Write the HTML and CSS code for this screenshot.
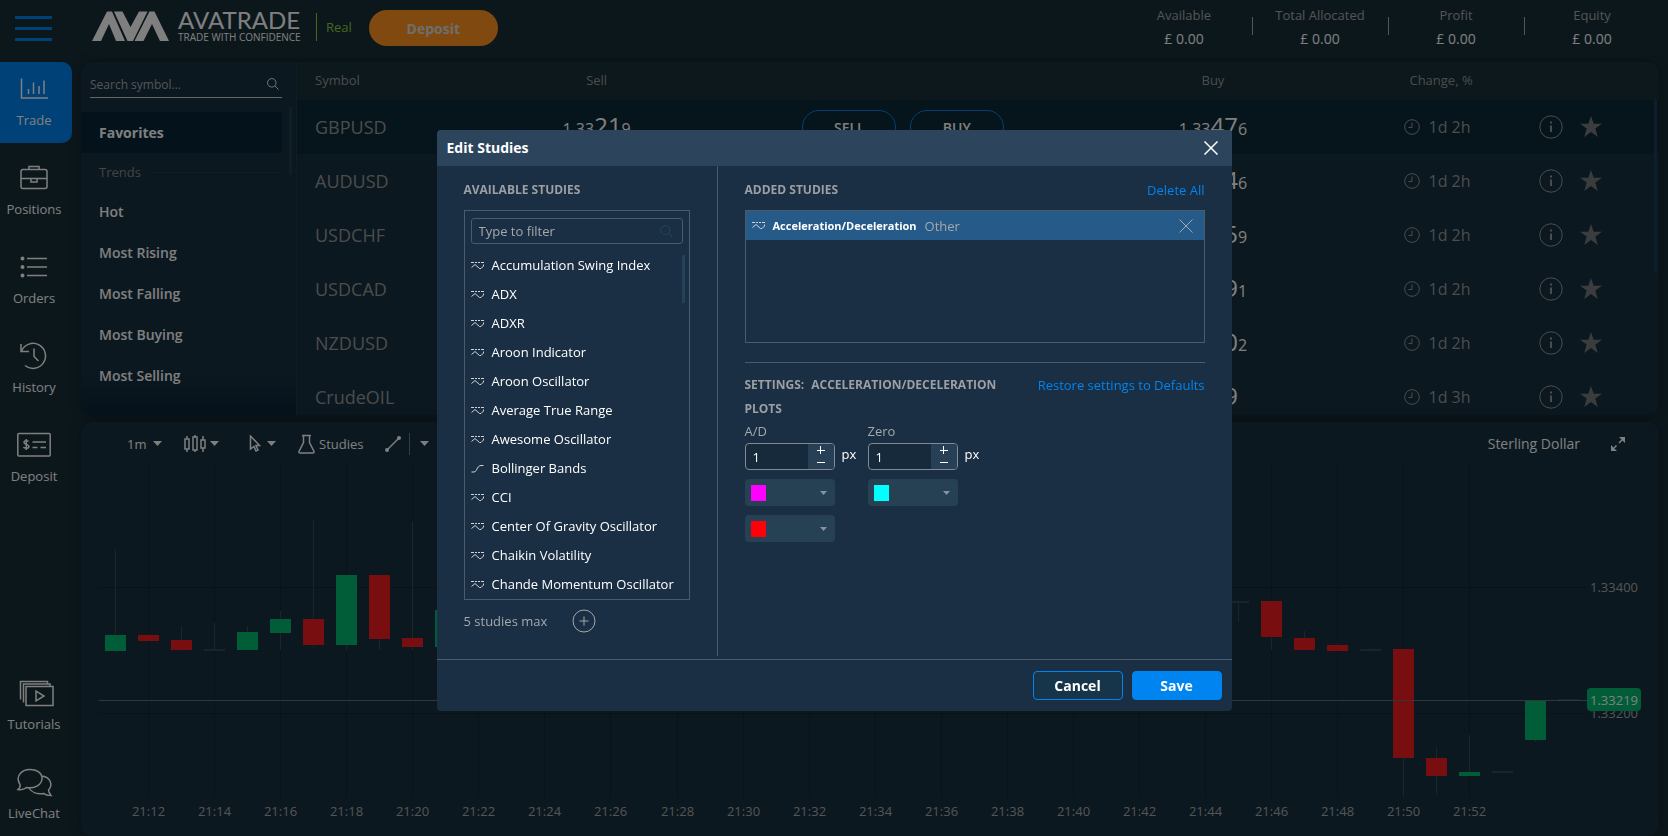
FILE: index.html
```html
<!DOCTYPE html>
<html lang="en">
<head>
  <meta charset="utf-8">
  <title>AvaTrade WebTrader</title>
  <meta name="viewport" content="width=device-width, initial-scale=1">
  <link rel="stylesheet" href="styles.css">
</head>

<body>
  <!-- shared icons -->
  <svg class="sprite" aria-hidden="true">
    <symbol id="i-study" viewBox="0 0 13 9">
      <path d="M0 1.5h3M4 1.5h2M7 1.5h2M10 1.5h3" />
      <path d="M.5 6.5L4 3.5L8.5 7.5H10L12.5 5V3.5" />
    </symbol>
    <symbol id="i-band" viewBox="0 0 13 9">
      <path d="M.5 8H3C5 8 5.500 5.500 6.500 4S8.500 1.500 10 1.500H12.500" />
    </symbol>
    <symbol id="i-clock" viewBox="0 0 16 16">
      <circle cx="8" cy="8" r="7.300" />
      <path d="M8 3.500V8.500H4.500" />
    </symbol>
    <symbol id="i-info" viewBox="0 0 24 24">
      <circle cx="12" cy="12" r="11.200" />
      <path d="M12 10.500V17M12 6.500V8.500" stroke-width="2" />
    </symbol>
    <symbol id="i-star" viewBox="0 0 22 22">
      <path d="M11 0L13.700 7.700H22L15.300 12.600L17.800 21L11 16L4.200 21L6.700 12.600L0 7.700H8.300Z" />
    </symbol>
    <symbol id="i-search" viewBox="0 0 13 13">
      <circle cx="5.200" cy="5.200" r="4.600" />
      <path d="M8.600 8.600L12.500 12.500" />
    </symbol>
    <symbol id="i-close" viewBox="0 0 14 14">
      <path d="M.5 .5L13.500 13.500M13.500 .5L.5 13.500" />
    </symbol>
    <symbol id="i-caret" viewBox="0 0 9 5">
      <path d="M0 0H9L4.500 5Z" />
    </symbol>
  </svg>

  <header class="topbar">
    <button class="menu-btn" type="button" aria-label="Menu"><span></span><span></span><span></span></button>
    <svg class="logo" width="208" height="34" viewBox="0 0 208 34" role="img" aria-label="AvaTrade">
      <path d="M0 31L15 1.500H20L33 31H24L17 14L9 31Z" />
      <path d="M22 1.500H30.500L38.500 17L47 1.500H55.500L41 31H35.500Z" />
      <path d="M57.500 1.500H62.500L77 31H68L60 14L51.500 31H42.500Z" />
      <text class="logo-name" x="86" y="19">AVATRADE</text>
      <text class="logo-tag" x="86" y="31">TRADE WITH CONFIDENCE</text>
    </svg>
    <span class="account-type">Real</span>
    <button class="deposit-btn" type="button">Deposit</button>
    <dl class="stats">
      <div class="stat"><dt>Available</dt><dd>£ 0.00</dd></div>
      <div class="stat"><dt>Total Allocated</dt><dd>£ 0.00</dd></div>
      <div class="stat"><dt>Profit</dt><dd>£ 0.00</dd></div>
      <div class="stat"><dt>Equity</dt><dd>£ 0.00</dd></div>
    </dl>
  </header>

  <div class="layout">
    <nav class="sidebar">
      <a href="#trade" class="side-item active">
        <svg width="34" height="28" viewBox="0 0 34 28"><path d="M4.500 3.500V23H31M11.500 14V19M16.500 7.500V19M22 11V19M27 5.500V19" /></svg>
        Trade
      </a>
      <a href="#positions" class="side-item">
        <svg width="34" height="28" viewBox="0 0 34 28"><rect x="4" y="5.500" width="26" height="19" rx="2" /><path d="M12 5V2.500H22V5M4 14.500H30M14 15V18H20V15" /></svg>
        Positions
      </a>
      <a href="#orders" class="side-item">
        <svg width="34" height="28" viewBox="0 0 34 28"><path d="M10 5.500H30M10 14H30M10 22.500H30" /><path class="dots" d="M5.500 5.500h.01M5.500 14h.01M5.500 22.500h.01" /></svg>
        Orders
      </a>
      <a href="#history" class="side-item">
        <svg width="34" height="28" viewBox="0 0 34 28"><path d="M4 2V9.500H12M4.500 9A12.500 12.500 0 1 1 8 23.500M17 6.500V14.500L21.500 19" /></svg>
        History
      </a>
      <a href="#deposit" class="side-item">
        <svg width="34" height="28" viewBox="0 0 34 28"><rect x=".8" y="2.500" width="32.400" height="22.500" rx="1" /><path d="M15.500 11H29M15.500 16.500H20.500M23.500 16.500H29M11.500 10.500C11 9.500 7 9 7 11.500S12 13 12 15.500S7 17.500 6.500 16M9.300 8V19" /></svg>
        Deposit
      </a>
      <a href="#tutorials" class="side-item push">
        <svg width="34" height="28" viewBox="0 0 34 28"><rect x="9" y="7.500" width="27" height="19" /><path d="M6.500 23.500V5H33V7M3.500 20.500V2.500H30.500V4.500M19 12V22L27 17Z" /></svg>
        Tutorials
      </a>
      <a href="#livechat" class="side-item">
        <svg width="34" height="28" viewBox="0 0 34 28"><path d="M1 21.500C3 20 3.500 18.500 3 16.500C-2 9 4 1.500 13 1.500C21 1.500 25.500 6 25 11C24.500 17 17 21 9.500 19.500C7 21.500 4 22 1 21.500ZM25 8C34 9.500 36 17 31.500 22C31.500 24 32.500 25.500 34 27.500C31 27.500 28.500 27 27 25.500C20.500 26.500 14.500 24.500 12 20" /></svg>
        LiveChat
      </a>
    </nav>

    <main class="main">
      <section class="panel quotes">
        <div class="watch">
          <div class="watch-search">
            <input type="search" placeholder="Search symbol..." aria-label="Search symbol">
            <svg class="line-icon" width="12" height="12"><use href="#i-search" /></svg>
          </div>
          <ul class="watch-list">
            <li><a href="#favorites" class="current">Favorites</a></li>
            <li class="group">Trends</li>
            <li><a href="#hot">Hot</a></li>
            <li><a href="#rising">Most Rising</a></li>
            <li><a href="#falling">Most Falling</a></li>
            <li><a href="#buying">Most Buying</a></li>
            <li><a href="#selling">Most Selling</a></li>
          </ul>
          <span class="thumb watch-thumb"></span>
        </div>

        <div class="rates">
          <table>
            <colgroup>
              <col class="c-symbol"><col class="c-sell"><col class="c-deal"><col class="c-buy"><col class="c-change"><col class="c-tools"><col>
            </colgroup>
            <thead>
              <tr><th class="left">Symbol</th><th>Sell</th><th></th><th>Buy</th><th>Change, %</th><th></th><th></th></tr>
            </thead>
            <tbody id="rates"></tbody>
          </table>
          <span class="thumb rates-thumb"></span>
        </div>
      </section>

      <section class="panel chart">
        <div class="toolbar">
          <label class="period">
            <select aria-label="Period"><option>1m</option></select>
            <svg class="caret" width="9" height="5"><use href="#i-caret" /></svg>
          </label>
          <button type="button" class="tool t-type" aria-label="Chart type">
            <svg width="22" height="18" viewBox="0 0 22 18"><path d="M3 1V4M3 14V17M11 0V2M11 15V17M19 1V5M19 13V17" /><rect x="1" y="4" width="4" height="10" /><rect x="9" y="2" width="4" height="13" /><rect x="17" y="5" width="4" height="8" /></svg>
            <svg class="caret" width="9" height="5"><use href="#i-caret" /></svg>
          </button>
          <button type="button" class="tool t-cursor" aria-label="Cursor">
            <svg width="12" height="17" viewBox="0 0 12 17"><path d="M1.500 1L10.500 10.500H7L9 15L7 16L5 11.500L1.500 14Z" /></svg>
            <svg class="caret" width="9" height="5"><use href="#i-caret" /></svg>
          </button>
          <button type="button" class="tool t-studies">
            <svg width="17" height="20" viewBox="0 0 17 20"><path d="M4 1.500H13M5.500 2V8.500L1 17.500Q.8 19 2 19H15Q16.200 19 16 17.500L11.500 8.500V2" /></svg>
            Studies
          </button>
          <button type="button" class="tool t-line" aria-label="Trend line">
            <svg width="16" height="16" viewBox="0 0 16 16"><path d="M2 14L14 2" /><path class="dots" d="M2 14h.01M14 2h.01" /></svg>
          </button>
          <button type="button" class="tool t-more" aria-label="More drawings">
            <svg class="caret" width="9" height="5"><use href="#i-caret" /></svg>
          </button>
          <span class="chart-title">Sterling Dollar</span>
          <button type="button" class="tool t-full" aria-label="Full screen">
            <svg width="14" height="14" viewBox="0 0 14 14"><path d="M3 11L5.500 8.500M8 6L11.500 2.500" /><path class="solid" d="M8 0H14V6L8 0ZM0 8V14H6Z" /></svg>
          </button>
        </div>
        <svg id="plot" class="plot" viewBox="0 0 1578 373" role="img" aria-label="GBPUSD price chart"></svg>
      </section>
    </main>
  </div>

  <div class="backdrop">
    <div class="dialog" role="dialog" aria-labelledby="dlg-title">
      <div class="dialog-head">
        <h1 id="dlg-title">Edit Studies</h1>
        <button type="button" class="icon-btn" aria-label="Close"><svg class="line-icon" width="14" height="14"><use href="#i-close" /></svg></button>
      </div>

      <div class="dialog-body">
        <section class="available">
          <h2>Available Studies</h2>
          <div class="study-box">
            <div class="filter">
              <input type="text" placeholder="Type to filter" aria-label="Filter studies">
              <svg class="line-icon" width="13" height="13"><use href="#i-search" /></svg>
            </div>
            <ul class="studies" id="studies"></ul>
            <span class="thumb study-thumb"></span>
          </div>
          <div class="limit">
            <span>5 studies max</span>
            <button type="button" class="icon-btn" aria-label="Add study">
              <svg class="line-icon" width="24" height="24" viewBox="0 0 24 24"><circle cx="12" cy="12" r="11" /><path d="M12 7.500V16.500M7.500 12H16.500" /></svg>
            </button>
          </div>
        </section>

        <section class="added">
          <div class="row">
            <h2>Added Studies</h2>
            <a href="#delete-all">Delete All</a>
          </div>
          <div class="added-box">
            <div class="added-item">
              <svg class="line-icon" width="13" height="9"><use href="#i-study" /></svg>
              <strong>Acceleration/Deceleration</strong>
              <span>Other</span>
              <button type="button" class="icon-btn" aria-label="Remove study"><svg class="line-icon" width="14" height="14"><use href="#i-close" /></svg></button>
            </div>
          </div>

          <div class="row settings-row">
            <h2>Settings: <span>Acceleration/Deceleration</span></h2>
            <a href="#restore">Restore settings to Defaults</a>
          </div>
          <h2 class="plots-title">Plots</h2>
          <div class="plots">
            <div class="plot-set">
              <label for="ad">A/D</label>
              <div class="size">
                <div class="stepper">
                  <input id="ad" type="text" value="1">
                  <span class="steps"><button type="button" class="plus" aria-label="Increase"></button><button type="button" class="minus" aria-label="Decrease"></button></span>
                </div>
                px
              </div>
              <div class="color magenta"><select aria-label="A/D first color"><option value="magenta"></option></select><svg class="caret" width="7" height="4" viewBox="0 0 9 5"><path d="M0 0H9L4.500 5Z" /></svg></div>
              <div class="color red"><select aria-label="A/D second color"><option value="red"></option></select><svg class="caret" width="7" height="4" viewBox="0 0 9 5"><path d="M0 0H9L4.500 5Z" /></svg></div>
            </div>
            <div class="plot-set">
              <label for="zero">Zero</label>
              <div class="size">
                <div class="stepper">
                  <input id="zero" type="text" value="1">
                  <span class="steps"><button type="button" class="plus" aria-label="Increase"></button><button type="button" class="minus" aria-label="Decrease"></button></span>
                </div>
                px
              </div>
              <div class="color cyan"><select aria-label="Zero color"><option value="cyan"></option></select><svg class="caret" width="7" height="4" viewBox="0 0 9 5"><path d="M0 0H9L4.500 5Z" /></svg></div>
            </div>
          </div>
        </section>
      </div>

      <div class="dialog-foot">
        <button type="button" class="btn">Cancel</button>
        <button type="button" class="btn primary">Save</button>
      </div>
    </div>
  </div>

  <script src="app.js"></script>
</body>
</html>
```

FILE: styles.css
```css
* {
  box-sizing: border-box;
}
body {
  margin: 0;
  height: 100vh;
  display: flex;
  flex-direction: column;
  overflow: hidden;
  background: #182e38;
  color: #fff;
  font-family: "Open Sans", "Noto Sans", sans-serif;
  font-size: 13px;
}
button, input, select {
  font: inherit;
  color: inherit;
  background: none;
  border: none;
  padding: 0;
  margin: 0;
  appearance: none;
  outline: none;
}
button {
  cursor: pointer;
}
a {
  color: #0084f0;
  text-decoration: none;
}
h1, h2, ul, dl, dd {
  margin: 0;
  padding: 0;
}
ul {
  list-style: none;
}
svg {
  display: block;
  flex: none;
}
.sprite {
  position: absolute;
  width: 0;
  height: 0;
}
.line-icon {
  fill: none;
  stroke: currentColor;
}
.caret {
  fill: currentColor;
}

/* top bar */
.topbar {
  flex: none;
  display: flex;
  align-items: center;
  height: 62px;
  padding: 0 8px 8px 15px;
}
.menu-btn {
  display: flex;
  flex-direction: column;
  gap: 8px;
  width: 37px;
  margin: 2px 40px 0 0;
}
.menu-btn span {
  height: 3px;
  background: #0082f0;
}
.logo {
  fill: #fff;
  overflow: visible;
}
.logo-name {
  font-family: Lato, sans-serif;
  font-size: 24px;
  font-weight: 400;
}
.logo-tag {
  font-family: "Open Sans", sans-serif;
  font-size: 10px;
}
.account-type {
  height: 28px;
  margin-left: 16px;
  padding-left: 9px;
  border-left: 1px solid #8ccc40;
  color: #8ccc40;
  line-height: 28px;
}
.deposit-btn {
  width: 129px;
  height: 36px;
  margin: 2px 0 0 17px;
  border-radius: 18px;
  background: #fe931f;
  color: #ddd;
  font-size: 14px;
  font-weight: 700;
}
.stats {
  display: flex;
  margin-left: auto;
  text-align: center;
}
.stat {
  position: relative;
  width: 136px;
}
.stat + .stat::before {
  content: "";
  position: absolute;
  left: 0;
  top: 14px;
  height: 18px;
  border-left: 1px solid #aaa;
}
.stat dt {
  color: #aaa;
  line-height: 24px;
}
.stat dd {
  font-size: 14px;
  line-height: 24px;
}

/* sidebar */
.layout {
  flex: 1;
  display: flex;
  min-height: 0;
}
.sidebar {
  flex: none;
  display: flex;
  flex-direction: column;
  gap: 8px;
  width: 81px;
}
.side-item {
  display: flex;
  flex-direction: column;
  align-items: center;
  gap: 8px;
  width: 72px;
  height: 81px;
  padding: 13px 4px 0 0;
  border-radius: 0 10px 10px 0;
  color: #fff;
  line-height: 18px;
}
.side-item.active {
  background: #0082f0;
}
.side-item svg {
  fill: none;
  stroke: #fff;
  stroke-width: 1.500;
  overflow: visible;
}
.side-item .dots {
  stroke-width: 4;
  stroke-linecap: round;
}
.push {
  margin-top: auto;
}

/* panels */
.main {
  flex: 1;
  display: grid;
  grid-template-rows: 46fr 54fr;
  gap: 7px;
  min-width: 0;
  margin-right: 9px;
}
.panel {
  min-height: 0;
  border-radius: 12px;
  background: #163040;
  box-shadow: 0 0 12px rgba(0, 0, 0, .35);
  overflow: hidden;
}
.quotes {
  display: flex;
}
.thumb {
  position: absolute;
  width: 3px;
  background: #1e3c52;
}
.watch {
  position: relative;
  flex: none;
  width: 216px;
  border-right: 1px solid #23394c;
  background: linear-gradient(#163040 88%, #0a2436);
}
.watch-search {
  display: flex;
  align-items: center;
  height: 27px;
  margin: 9px 14px 14px 9px;
  border-bottom: 1px solid #ccc;
  padding-right: 3px;
}
.watch-search input {
  flex: 1;
  min-width: 0;
  font-size: 12px;
}
.watch-search input::placeholder {
  color: #aaa;
}
.watch-list a, .group {
  display: block;
  height: 41px;
  margin-right: 14px;
  padding-left: 18px;
  color: #fff;
  font-size: 14px;
  font-weight: 600;
  line-height: 41px;
}
.watch-list .current {
  background: #082436;
  font-weight: 700;
}
.watch-list .group {
  display: flex;
  align-items: center;
  gap: 9px;
  height: 38px;
  color: #888;
  font-size: 13px;
  font-weight: 400;
}
.group::after {
  content: "";
  flex: 1;
  border-top: 1px solid #23394c;
}
.watch-thumb {
  right: 4px;
  top: 45px;
  height: 68px;
}
.rates {
  position: relative;
  flex: 1;
}
.rates table {
  width: 100%;
  table-layout: fixed;
  border-collapse: collapse;
  text-align: center;
}
.c-symbol { width: 12%; }
.c-sell { width: 20%; }
.c-deal { width: 25%; }
.c-buy { width: 20.500%; }
.c-change { width: 13%; }
.c-tools { width: 6%; }
.rates th {
  height: 38px;
  padding: 0 0 3px;
  background: #1a3039;
  color: #999;
  font-size: 13px;
  font-weight: 400;
}
.rates td {
  height: 54px;
  padding: 0;
}
.rates .left {
  padding-left: 18px;
  text-align: left;
}
.rates .symbol {
  color: #999;
  font-size: 18px;
}
.rates tbody tr:first-child {
  background: #0c2838;
}
.price {
  font-size: 16px;
  line-height: 24px;
}
.price b {
  font-size: 24px;
  font-weight: 400;
}
.deal {
  width: 94px;
  height: 34px;
  margin: 0 5px;
  border: 1px solid #0082f0;
  border-radius: 17px;
  font-size: 14px;
  font-weight: 600;
}
.change, .tools {
  display: flex;
  align-items: center;
  justify-content: center;
  color: #999;
}
.change {
  gap: 9px;
  padding-right: 8px;
  font-size: 16px;
}
.tools {
  gap: 17px;
}
.star {
  fill: #77787a;
}
.rates-thumb {
  right: 2px;
  top: 37px;
  height: 174px;
}

/* chart */
.chart {
  display: flex;
  flex-direction: column;
}
.toolbar {
  flex: none;
  display: flex;
  align-items: center;
  height: 41px;
  padding: 3px 34px 0 46px;
}
.period, .tool {
  display: flex;
  align-items: center;
  gap: 6px;
}
.tool {
  height: 22px;
}
.tool svg:not(.caret) {
  fill: none;
  stroke: #fff;
  stroke-width: 1.500;
}
.tool .dots {
  stroke-width: 4;
  stroke-linecap: round;
}
.tool .solid {
  fill: #fff;
  stroke: none;
}
.t-type { gap: 4px; margin-left: 22px; }
.t-cursor { margin-left: 30px; }
.t-studies { gap: 4px; margin-left: 22px; }
.t-line { margin-left: 22px; }
.t-more {
  margin-left: 8px;
  padding-left: 10px;
  border-left: 1px solid #777;
}
.chart-title {
  margin-left: auto;
  font-size: 14px;
}
.t-full {
  margin-left: 31px;
}
.plot {
  width: 100%;
}
.plot text {
  fill: #aaa;
  font-size: 13px;
  text-anchor: middle;
}
.plot .last-price { fill: #fff; }
.plot .grid { stroke: #102430; }
.plot .now { stroke: #60707a; }
.plot .wick { stroke: #3c4a54; }
.plot .g { fill: #00ba70; }
.plot .r { fill: #f01c20; }
.plot .n { fill: #364854; }

/* edit studies dialog */
.backdrop {
  position: fixed;
  inset: 0;
  display: flex;
  align-items: center;
  justify-content: center;
  padding-top: 5px;
  background: rgba(0, 0, 0, .5);
}
.dialog {
  width: 795px;
  border-radius: 4px;
  background: #1a2f43;
  overflow: hidden;
}
.dialog-head {
  display: flex;
  align-items: center;
  justify-content: space-between;
  height: 36px;
  padding: 0 14px 0 10px;
  background: #2c455c;
}
.dialog-head h1 {
  font-size: 14px;
  line-height: 20px;
}
.dialog-head .line-icon {
  stroke-width: 1.500;
}
.dialog-body {
  display: flex;
  padding-bottom: 3px;
}
.dialog h2 {
  color: #9c9fa3;
  font-size: 12px;
  font-weight: 700;
  line-height: 16px;
  text-transform: uppercase;
}
.available {
  flex: none;
  width: 281px;
  padding: 16px 27px 23px;
  border-right: 1px solid #4a5b6c;
}
.study-box {
  position: relative;
  margin-top: 12px;
  padding: 7px 6px 0;
  border: 1px solid #4a5b6c;
}
.filter {
  display: flex;
  align-items: center;
  height: 26px;
  margin-bottom: 7px;
  padding: 0 9px 0 7px;
  border: 1px solid #4a5b6c;
  border-radius: 3px;
}
.filter input {
  flex: 1;
  min-width: 0;
}
.filter input::placeholder {
  color: #a5a8ac;
}
.filter .line-icon {
  color: #28465c;
}
.studies li {
  display: flex;
  align-items: center;
  gap: 8px;
  height: 29px;
  padding-bottom: 1px;
  white-space: nowrap;
}
.studies svg, .added-item > svg {
  stroke: #cfd5da;
}
.study-thumb {
  right: 4px;
  top: 44px;
  height: 48px;
  background: #24425a;
}
.limit {
  display: flex;
  align-items: center;
  gap: 25px;
  margin-top: 9px;
  color: #a5a8ac;
}
.added {
  flex: 1;
  padding: 16px 27px 0;
}
.row {
  display: flex;
  justify-content: space-between;
  line-height: 16px;
}
.added-box {
  height: 133px;
  margin: 12px 0 19px;
  border: 1px solid #4a5b6c;
}
.added-item {
  display: flex;
  align-items: center;
  gap: 8px;
  height: 29px;
  padding: 0 11px 0 6px;
  background: #265a88;
}
.added-item strong {
  font-size: 11px;
}
.added-item span, .added-item .icon-btn {
  color: #a5a8ac;
}
.added-item .icon-btn {
  margin-left: auto;
}
.settings-row {
  padding-top: 14px;
  border-top: 1px solid #4a5b6c;
}
.settings-row span {
  margin-left: 4px;
}
.plots-title {
  margin-top: 8px;
}
.plots {
  display: flex;
  gap: 33px;
  margin-top: 6px;
}
.plot-set {
  width: 90px;
}
.plot-set label {
  display: block;
  color: #a5a8ac;
  line-height: 16px;
}
.size {
  display: flex;
  gap: 7px;
  margin: 4px 0 9px;
  line-height: 22px;
  white-space: nowrap;
}
.stepper {
  flex: none;
  display: flex;
  width: 90px;
  height: 27px;
  border: 1px solid #808b95;
  border-radius: 4px;
  background: #162a3b;
  overflow: hidden;
}
.stepper input {
  flex: 1;
  min-width: 0;
  padding-left: 7px;
}
.steps {
  display: flex;
  flex-direction: column;
  width: 26px;
  background: #274056;
}
.steps button {
  flex: 1;
  background: linear-gradient(#fff, #fff) center / 8px 1px no-repeat;
}
.steps .plus {
  background: linear-gradient(#fff, #fff) center / 8px 1px no-repeat, linear-gradient(#fff, #fff) center / 1px 8px no-repeat;
}
.color {
  position: relative;
  height: 27px;
  margin-bottom: 9px;
  border-radius: 4px;
  background: #264054;
}
.color select {
  width: 100%;
  height: 100%;
}
.color::before {
  content: "";
  position: absolute;
  left: 6px;
  top: 6px;
  width: 15px;
  height: 16px;
  pointer-events: none;
}
.magenta::before { background: #f0f; }
.red::before { background: #ff0008; }
.cyan::before { background: #0ff; }
.color .caret {
  position: absolute;
  right: 8px;
  top: 12px;
  color: #8593a0;
  pointer-events: none;
}
.dialog-foot {
  display: flex;
  justify-content: flex-end;
  gap: 9px;
  padding: 11px 10px;
  border-top: 1px solid #4a5b6c;
}
.btn {
  width: 90px;
  height: 29px;
  border: 1px solid #0084f0;
  border-radius: 4px;
  background: #16344a;
  font-size: 14px;
  font-weight: 700;
}
.btn.primary {
  background: #0084f0;
}
```

FILE: app.js
```js
// quotes: symbol, sell [small, big, small], buy [small, big, small], time left
const rates = [
  ["GBPUSD", ["1.33", "21", "9"], ["1.33", "47", "6"], "1d 2h"],
  ["AUDUSD", ["0.71", "27", "9"], ["0.71", "34", "6"], "1d 2h"],
  ["USDCHF", ["0.92", "33", "2"], ["0.92", "55", "9"], "1d 2h"],
  ["USDCAD", ["1.27", "66", "8"], ["1.27", "79", "1"], "1d 2h"],
  ["NZDUSD", ["0.67", "78", "4"], ["0.67", "90", "2"], "1d 2h"],
  ["CrudeOIL", ["72.", "32", ""], ["72.", "39", ""], "1d 3h"]
];

const price = (p) => `<span class="price">${p[0]}<b>${p[1]}</b>${p[2]}</span>`;

document.getElementById("rates").innerHTML = rates.map(([name, sell, buy, left]) => `
  <tr>
    <td class="left symbol">${name}</td>
    <td>${price(sell)}</td>
    <td>${name === "GBPUSD" ? '<button type="button" class="deal">SELL</button> <button type="button" class="deal">BUY</button>' : ""}</td>
    <td>${price(buy)}</td>
    <td><div class="change"><svg class="line-icon" width="16" height="16"><use href="#i-clock" /></svg>${left}</div></td>
    <td><div class="tools"><svg class="line-icon" width="24" height="24"><use href="#i-info" /></svg><svg class="star" width="22" height="22"><use href="#i-star" /></svg></div></td>
    <td></td>
  </tr>`).join("");

// studies
const studies = [
  "Accumulation Swing Index", "ADX", "ADXR", "Aroon Indicator", "Aroon Oscillator",
  "Average True Range", "Awesome Oscillator", "Bollinger Bands", "CCI",
  "Center Of Gravity Oscillator", "Chaikin Volatility", "Chande Momentum Oscillator"
];

document.getElementById("studies").innerHTML = studies.map((s) =>
  `<li><svg class="line-icon" width="13" height="9"><use href="#${s === "Bollinger Bands" ? "i-band" : "i-study"}" /></svg>${s}</li>`
).join("");

// candles: index, kind, body top, body bottom, wick top, wick bottom
const candles = [
  [0, "g", 172, 188, 86, 188],
  [1, "r", 172, 178, 171, 178],
  [2, "r", 177, 187, 163, 188],
  [3, "n", 186, 188, 160, 188],
  [4, "g", 169, 187, 163, 187],
  [5, "g", 156, 170, 148, 187],
  [6, "r", 156, 182, 56, 184],
  [7, "g", 112, 182, 112, 188],
  [8, "r", 112, 176, 112, 187],
  [9, "r", 175, 184, 58, 187],
  [10, "g", 147, 184, 147, 184],
  [34, "n", 138, 140, 138, 159],
  [35, "r", 138, 174, 138, 187],
  [36, "r", 175, 187, 168, 187],
  [37, "r", 182, 188, 180, 188],
  [38, "n", 186, 188, 185, 188],
  [39, "r", 186, 295, 186, 334],
  [40, "r", 295, 313, 284, 332],
  [41, "g", 309, 313, 272, 313],
  [42, "n", 308, 310, 308, 310],
  [43, "g", 237, 277, 237, 279],
  [44, "n", 236, 238, 236, 238]
];
const xOf = (i) => Math.round(34 + i * 33.03) + 0.5;

let out = "";
for (let i = 1; i <= 41; i += 2) {
  out += `<path class="grid" d="M${xOf(i)} 0V334" /><text x="${xOf(i)}" y="353">21:${11 + i}</text>`;
}
out += '<path class="grid" d="M18 124.5H1506M18 250.5H1506" />';
for (const [i, kind, top, bottom, high, low] of candles) {
  out += `<path class="wick" d="M${xOf(i)} ${high}V${low}" /><rect class="${kind}" x="${xOf(i) - 10.5}" y="${top}" width="21" height="${bottom - top}" />`;
}
out += '<path class="now" d="M18 237.5H1506" />';
out += '<text x="1533" y="129">1.33400</text><text x="1533" y="255">1.33200</text>';
out += '<rect class="g" x="1506" y="225" width="54" height="23" rx="4" /><text class="last-price" x="1533" y="242">1.33219</text>';
document.getElementById("plot").innerHTML = out;
```
